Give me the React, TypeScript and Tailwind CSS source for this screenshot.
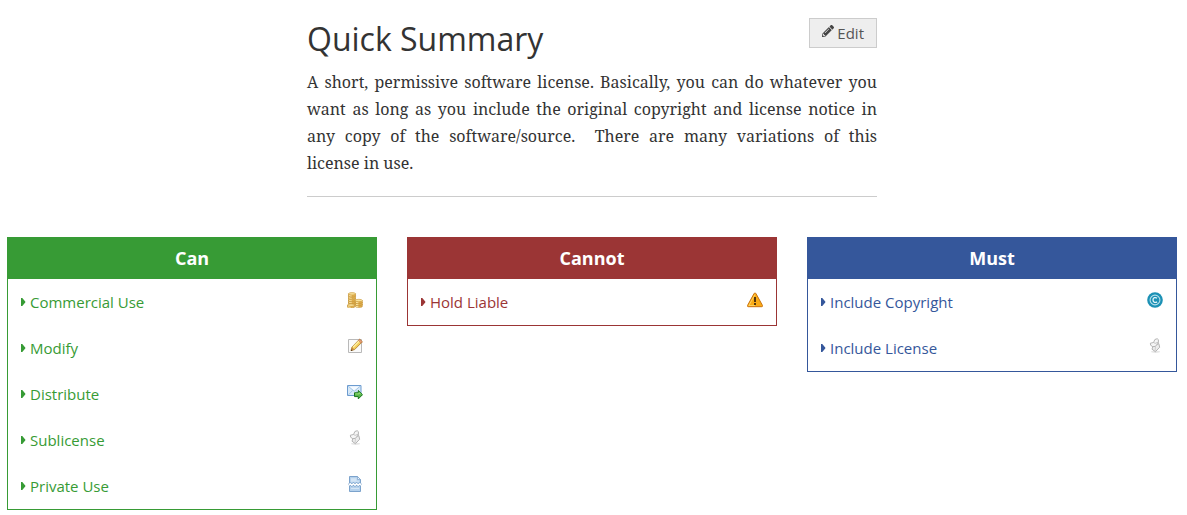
import type { ReactNode } from "react";
import { FaCaretRight, FaPencilAlt } from "react-icons/fa";

function Icon({ children }: { children: ReactNode }) {
  return (
    <svg viewBox="0 0 16 16" className="mt-[13px] size-4 shrink-0" aria-hidden="true">
      {children}
    </svg>
  );
}

function Coin({ x, y }: { x: number; y: number }) {
  return (
    <g transform={`translate(${x} ${y})`}>
      <path d="M.5 1.5v2c0 1.2 7 1.2 7 0v-2z" fill="#e3b04a" stroke="#c08e34" strokeWidth=".6" />
      <path d="M1.8 2.6v1.3M3 2.8v1.4" stroke="#fff0b8" strokeWidth="1" />
      <ellipse cx="4" cy="1.5" rx="3.5" ry="1.2" fill="#f9e39a" stroke="#c8963a" strokeWidth=".6" />
    </g>
  );
}

function CoinsIcon() {
  return (
    <Icon>
      <Coin x={1} y={9} />
      <Coin x={1} y={7} />
      <Coin x={1} y={5} />
      <Coin x={1} y={2.6} />
      <Coin x={1} y={0.3} />
      <Coin x={7.8} y={11} />
      <Coin x={7.8} y={9} />
      <Coin x={7.8} y={7} />
      <Coin x={0} y={11.6} />
    </Icon>
  );
}

function NoteIcon() {
  return (
    <Icon>
      <path d="M1.5 1.5h13v13h-13z" fill="#fafafa" stroke="#b9b9b9" />
      <path d="M4 12.6 5 9l7.6-7.8 2.7 2.6L7.6 11.6z" fill="#f5cf5b" stroke="#a87522" strokeWidth=".8" />
      <path d="m6 9.3 6.4-6.5" stroke="#fff0a6" strokeWidth="1.3" />
      <path d="m11.4 2.4 1.2-1.2 2.7 2.6-1.2 1.2z" fill="#e9a17c" stroke="#b96a48" strokeWidth=".5" />
      <path d="M5 9.2 4 12.6l3.5-1z" fill="#c48a45" />
      <path d="m4.4 11.2-.6 1.7 1.7-.5z" fill="#493018" />
    </Icon>
  );
}

function EmailGoIcon() {
  return (
    <Icon>
      <path d="M.5 1.5H14v10H.5z" fill="#d8e9f8" stroke="#6c9bcf" />
      <path d="m1.5 2.5 5.7 4.8L13 2.5z" fill="#f5faff" />
      <path d="m1.2 2.2 6 5 6-5M1.5 10.8l4.2-4.4m7.3 4.4L8.8 6.4" fill="none" stroke="#9abfe3" strokeWidth=".9" />
      <path d="M7.5 8.8h3.8V6.5l4.2 4.2-4.2 4.2v-2.3H7.5z" fill="#58b64a" stroke="#17751b" />
      <path d="M8.3 9.9h3.9V8.6l1.6 1.7" fill="none" stroke="#a4e67e" strokeWidth=".9" />
    </Icon>
  );
}

function ScriptIcon() {
  return (
    <Icon>
      <ellipse cx="8.5" cy="13.8" rx="4.5" ry="1.1" fill="#e6e6e6" />
      <path d="M6.3 7.6 11.8 5.6l.9 3.6-4.300 4.500L5 11.200l.8-2.500z" fill="#ececec" stroke="#adadad" strokeWidth=".9" />
      <path d="M3.400 5.200 6.500 4.500l1.400-3L10.200.7l1.200 1v3.100L8.500 8.300 5.800 8.700 3.600 7.200z" fill="#f6f6f6" stroke="#adadad" strokeWidth=".9" />
      <path d="m6.500 4.500 1.700.8 3-1" fill="none" stroke="#b8b8b8" strokeWidth=".8" />
      <path d="m8.500 8.300-.4 4.600" fill="none" stroke="#c6c6c6" strokeWidth=".8" />
    </Icon>
  );
}

function TornPageIcon() {
  return (
    <Icon>
      <path d="M2.5.5h8l3 3v12h-11z" fill="#b5d1ec" stroke="#7ca3cc" />
      <path d="M4 2.2h5.500v2.500H12v1H4zM4 12h8v1H4z" fill="#d4e5f5" />
      <path d="M10.500.5v3h3z" fill="#eaf4fd" stroke="#7ca3cc" strokeWidth=".7" />
      <path d="m1.800 9.200 1.400-1.400 1.600 1.500 1.600-1.500L8 9.300l1.600-1.500 1.600 1.500 1.600-1.500 1.300 1.300" fill="none" stroke="#7ca3cc" strokeWidth="2.600" />
      <path d="m1.800 9.200 1.400-1.400 1.600 1.500 1.600-1.500L8 9.300l1.600-1.500 1.600 1.500 1.600-1.500 1.300 1.300" fill="none" stroke="#fff" strokeWidth="1.500" />
    </Icon>
  );
}

function WarningIcon() {
  return (
    <Icon>
      <path d="M8 1c-.5 0-.8.3-1 .7L.5 13.500c-.3.600 0 1.200.700 1.200h13.600c.7 0 1-.6.700-1.200L9 1.700C8.800 1.300 8.500 1 8 1z" fill="#faab16" stroke="#c9710d" strokeWidth="1" />
      <path d="M8 2.500 1.900 13.500H8" fill="none" stroke="#ffdc6d" strokeWidth=".8" />
      <path d="M7 5h2v5H7zM7 11h2v2H7z" fill="#53350c" />
    </Icon>
  );
}

function CopyrightIcon() {
  return (
    <Icon>
      <circle cx="8" cy="8" r="7.800" fill="#1c91b5" />
      <circle cx="8" cy="8" r="4.900" fill="none" stroke="#b5dfeb" strokeWidth="1.100" />
      <path d="M10 6.300C8.500 4.800 6 5.700 6 8s2.500 3.200 4 1.700" fill="none" stroke="#e3f5f9" strokeWidth="1.300" />
    </Icon>
  );
}

type Rule = { label: string; icon: ReactNode };

type Tone = { box: string; head: string; link: string };

const green: Tone = { box: "border-[#379b35]", head: "bg-[#379b35]", link: "text-[#379b35]" };
const red: Tone = { box: "border-[#9b3535]", head: "bg-[#9b3535]", link: "text-[#9b3535]" };
const blue: Tone = { box: "border-[#35579b]", head: "bg-[#35579b]", link: "text-[#35579b]" };

function RuleBox({ title, tone, rules }: { title: string; tone: Tone; rules: Rule[] }) {
  return (
    <section className={`border ${tone.box}`}>
      <h2 className={`text-center text-lg leading-[41px] font-bold text-white ${tone.head}`}>{title}</h2>
      <ul>
        {rules.map((rule) => (
          <li key={rule.label} className="flex items-start justify-between px-[13px]">
            <a href="#" className={`flex items-center gap-1 text-[15px] leading-[46px] ${tone.link}`}>
              <FaCaretRight viewBox="0 128 192 256" preserveAspectRatio="none" className="h-2 w-[5px]" aria-hidden="true" />
              {rule.label}
            </a>
            {rule.icon}
          </li>
        ))}
      </ul>
    </section>
  );
}

export default function App() {
  return (
    <main className="bg-white pt-[18px] pr-[10px] pb-[5px] pl-[7px] font-['Open_Sans',sans-serif] text-[#333]">
      <header className="mx-auto max-w-[570px] border-b border-[#ccc] pb-[19px]">
        <div className="flex items-start justify-between">
          <h1 className="text-[32px] leading-[42px]">Quick Summary</h1>
          <button
            type="button"
            className="flex h-[30px] items-center gap-[3px] border border-[#ccc] bg-[#eee] px-3 text-[15px] text-[#555]"
          >
            <FaPencilAlt className="mb-1 size-3 text-[#444]" aria-hidden="true" />
            Edit
          </button>
        </div>
        <p className="mt-[9px] text-justify font-['Noto_Serif','Droid_Serif','Liberation_Serif',serif] text-base leading-[27px]">
          A short, permissive software license. Basically, you can do whatever you want as long as you include the
          original copyright and license notice in any copy of the software/source.&nbsp; There are many variations of
          this license&nbsp;in&nbsp;use.
        </p>
      </header>
      <div className="mx-auto mt-10 grid max-w-[1170px] grid-cols-3 items-start gap-[30px]">
        <RuleBox
          title="Can"
          tone={green}
          rules={[
            { label: "Commercial Use", icon: <CoinsIcon /> },
            { label: "Modify", icon: <NoteIcon /> },
            { label: "Distribute", icon: <EmailGoIcon /> },
            { label: "Sublicense", icon: <ScriptIcon /> },
            { label: "Private Use", icon: <TornPageIcon /> },
          ]}
        />
        <RuleBox title="Cannot" tone={red} rules={[{ label: "Hold Liable", icon: <WarningIcon /> }]} />
        <RuleBox
          title="Must"
          tone={blue}
          rules={[
            { label: "Include Copyright", icon: <CopyrightIcon /> },
            { label: "Include License", icon: <ScriptIcon /> },
          ]}
        />
      </div>
    </main>
  );
}
